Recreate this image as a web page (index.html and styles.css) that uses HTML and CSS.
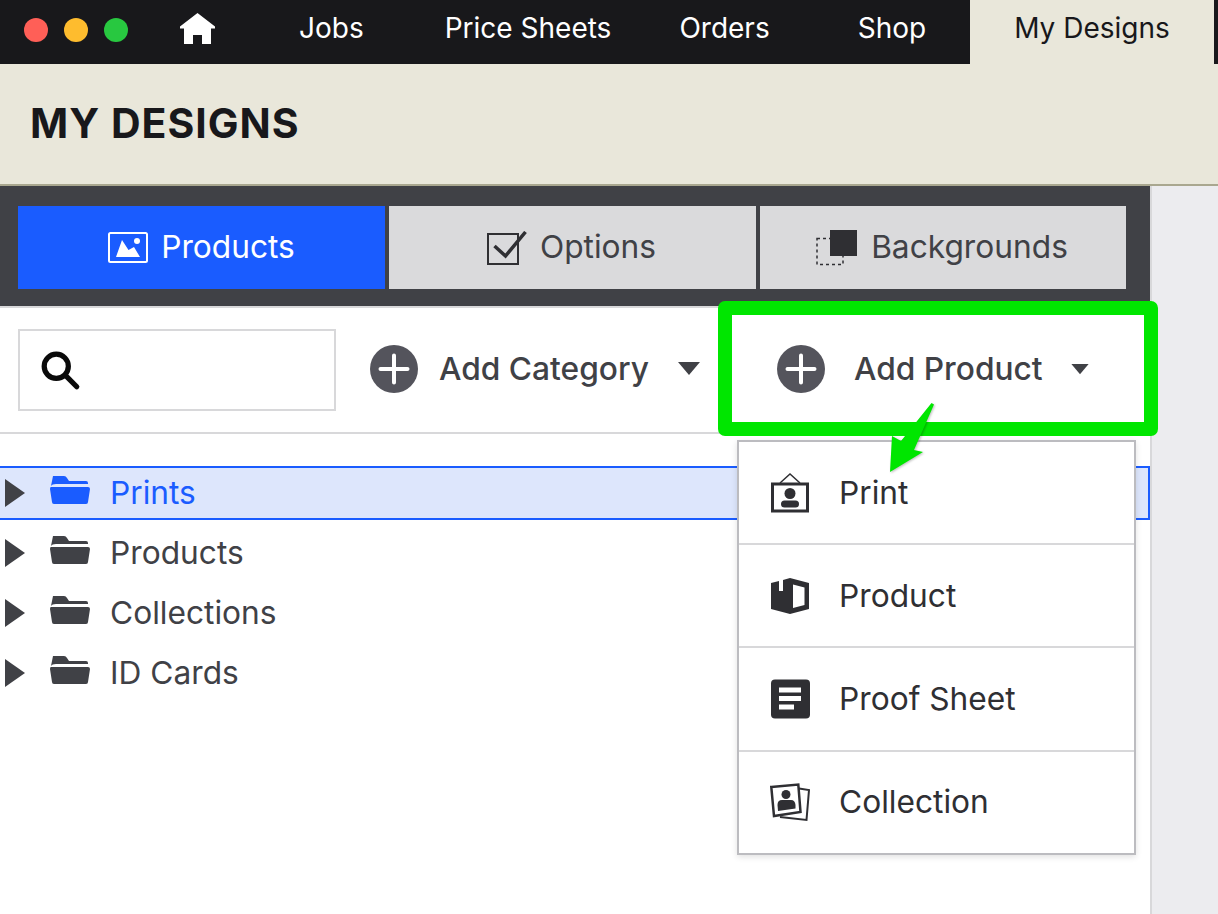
FILE: index.html
```html
<!DOCTYPE html>
<html lang="en">
<head>
<meta charset="utf-8">
<title>My Designs</title>
<link rel="stylesheet" href="styles.css">
</head>
<body>
<div class="app">
  <header class="topbar">
    <div class="lights"><span class="light red"></span><span class="light yellow"></span><span class="light green"></span></div>
    <svg class="home" viewBox="0 0 35 32"><path d="M17.500 0 L35 13.500 V15.500 H31 V31 H22 V22 H13 V31 H4 V15.500 H0 V13.500 Z" fill="#fff"/></svg>
    <nav class="nav">
      <a class="nav-item jobs">Jobs</a>
      <a class="nav-item sheets">Price Sheets</a>
      <a class="nav-item orders">Orders</a>
      <a class="nav-item shop">Shop</a>
      <a class="nav-item active">My Designs</a>
    </nav>
  </header>
  <div class="pagehead"><h1>MY DESIGNS</h1></div>
  <div class="workspace">
    <main class="main">
      <div class="tabs">
        <div class="tab on">
          <svg class="tab-icon" viewBox="0 0 40 32"><rect x="1" y="1" width="38" height="29" rx="1.500" fill="none" stroke="#fff" stroke-width="2"/><path d="M8 25 L14 8 L20.500 18 L26 15 L32 25 Z" fill="#fff"/><circle cx="29" cy="9" r="3" fill="#fff"/></svg>
          <span>Products</span>
        </div>
        <div class="tab">
          <svg class="tab-icon check-icon" viewBox="0 0 40 34"><rect x="1" y="3" width="30" height="30" fill="none" stroke="#2f2f33" stroke-width="2"/><path d="M7.500 15 L18.500 25 L38.500 1" fill="none" stroke="#2f2f33" stroke-width="3.500"/></svg>
          <span>Options</span>
        </div>
        <div class="tab">
          <svg class="tab-icon bg-icon" viewBox="0 0 42 36"><rect x="1" y="8.500" width="26" height="26" fill="none" stroke="#2f2f33" stroke-width="1.500" stroke-dasharray="3 3"/><rect x="14" y="0" width="27" height="26" fill="#2f2f33"/></svg>
          <span>Backgrounds</span>
        </div>
      </div>
      <div class="toolbar">
        <div class="search">
          <svg class="search-icon" viewBox="0 0 40 40"><circle cx="15.500" cy="15.500" r="11.500" fill="none" stroke="#0a0a0a" stroke-width="5"/><path d="M24 24 L35 35" stroke="#0a0a0a" stroke-width="5" stroke-linecap="round"/></svg>
        </div>
        <button class="add add-cat">
          <svg class="plus" viewBox="0 0 48 48"><circle cx="24" cy="24" r="24" fill="#54545c"/><path d="M10.500 24 H37.500 M24 10.500 V37.500" stroke="#fff" stroke-width="4" stroke-linecap="round"/></svg>
          <span>Add Category</span>
          <svg class="caret" viewBox="0 0 22 14"><path d="M0 0 H22 L11 13 Z" fill="#404146"/></svg>
        </button>
        <button class="add add-prod">
          <svg class="plus" viewBox="0 0 48 48"><circle cx="24" cy="24" r="24" fill="#54545c"/><path d="M10.500 24 H37.500 M24 10.500 V37.500" stroke="#fff" stroke-width="4" stroke-linecap="round"/></svg>
          <span>Add Product</span>
          <svg class="caret small" viewBox="0 0 22 14"><path d="M0 0 H22 L11 13 Z" fill="#404146"/></svg>
        </button>
      </div>
      <ul class="tree">
        <li class="row selected">
          <svg class="arrow" viewBox="0 0 20 28"><path d="M0 0 L20 14 L0 28 Z" fill="#404146"/></svg>
          <svg class="folder" viewBox="0 0 40 28"><path d="M3 0 H14 Q16 0 17 2 L19 5 H36 Q38 5 38 7 V8 H6 Q2 8 1 10 Z M1 11 H38 Q40 11 40 13 L38 26 Q38 28 36 28 H4 Q2 28 2 26 L0 13 Q0 11 1 11 Z" fill="currentColor"/></svg>
          <span>Prints</span>
        </li>
        <li class="row">
          <svg class="arrow" viewBox="0 0 20 28"><path d="M0 0 L20 14 L0 28 Z" fill="#404146"/></svg>
          <svg class="folder" viewBox="0 0 40 28"><path d="M3 0 H14 Q16 0 17 2 L19 5 H36 Q38 5 38 7 V8 H6 Q2 8 1 10 Z M1 11 H38 Q40 11 40 13 L38 26 Q38 28 36 28 H4 Q2 28 2 26 L0 13 Q0 11 1 11 Z" fill="currentColor"/></svg>
          <span>Products</span>
        </li>
        <li class="row">
          <svg class="arrow" viewBox="0 0 20 28"><path d="M0 0 L20 14 L0 28 Z" fill="#404146"/></svg>
          <svg class="folder" viewBox="0 0 40 28"><path d="M3 0 H14 Q16 0 17 2 L19 5 H36 Q38 5 38 7 V8 H6 Q2 8 1 10 Z M1 11 H38 Q40 11 40 13 L38 26 Q38 28 36 28 H4 Q2 28 2 26 L0 13 Q0 11 1 11 Z" fill="currentColor"/></svg>
          <span>Collections</span>
        </li>
        <li class="row">
          <svg class="arrow" viewBox="0 0 20 28"><path d="M0 0 L20 14 L0 28 Z" fill="#404146"/></svg>
          <svg class="folder" viewBox="0 0 40 28"><path d="M3 0 H14 Q16 0 17 2 L19 5 H36 Q38 5 38 7 V8 H6 Q2 8 1 10 Z M1 11 H38 Q40 11 40 13 L38 26 Q38 28 36 28 H4 Q2 28 2 26 L0 13 Q0 11 1 11 Z" fill="currentColor"/></svg>
          <span>ID Cards</span>
        </li>
      </ul>
    </main>
    <aside class="gutter"></aside>
  </div>
  <div class="highlight"></div>
  <div class="menu">
    <div class="menu-item">
      <svg class="menu-icon" viewBox="0 0 40 42"><path d="M10 11 L20 2 L30 11" fill="none" stroke="#2f2f33" stroke-width="1.500"/><rect x="2.500" y="12" width="35" height="27" fill="none" stroke="#2f2f33" stroke-width="3"/><circle cx="20" cy="21.500" r="5.500" fill="#2f2f33"/><rect x="11" y="28.500" width="18" height="7" rx="3.500" fill="#2f2f33"/></svg>
      <span>Print</span>
    </div>
    <div class="menu-item">
      <svg class="menu-icon" viewBox="0 0 40 42"><path d="M20 3 L39 8 V34 L20 39 L1 34 V8 L9 6 V16 H13 V5 Z M23 9.500 V33 L34.500 30 V12.500 Z" fill="#2f2f33" fill-rule="evenodd"/></svg>
      <span>Product</span>
    </div>
    <div class="menu-item sheet">
      <svg class="menu-icon" viewBox="0 0 40 42"><rect x="1" y="1.500" width="39" height="39" rx="4" fill="#2f2f33"/><path d="M9 9.500 H31 V14.500 H9 Z M9 18 H31 V23 H9 Z M9 26.500 H24 V31.500 H9 Z" fill="#fff"/></svg>
      <span>Proof Sheet</span>
    </div>
    <div class="menu-item">
      <svg class="menu-icon" viewBox="0 0 40 42"><path d="M29 7.500 L39 9 L36.500 39 L10 36" fill="none" stroke="#2f2f33" stroke-width="2"/><path d="M1.300 6 L28.300 3.500 L30.500 31 L4 35 Z" fill="#fff" stroke="#2f2f33" stroke-width="2.500"/><circle cx="16" cy="13.500" r="4.500" fill="#2f2f33"/><path d="M8 30 L7.500 24 Q7.500 19 12 19 H21 Q25 19 25.500 24 V27.500 Z" fill="#2f2f33"/></svg>
      <span>Collection</span>
    </div>
  </div>
  <svg class="pointer" viewBox="0 0 60 80"><path d="M51.500 3 L54 4.500 L34 50 L43 52 L10 72 L12 36 L21 41 Z" fill="#00e600"/></svg>
</div>
</body>
</html>
```
FILE: styles.css
```css
* { box-sizing: border-box; }
html, body { margin: 0; padding: 0; }
body { font-family: Inter, "Liberation Sans", sans-serif; background: #fff; }
.app { position: relative; width: 1218px; height: 914px; overflow: hidden; }

.topbar { display: flex; align-items: center; height: 64px; background: #18181b; }
.lights { display: flex; gap: 16px; padding-left: 24px; margin-bottom: 4px; }
.light { width: 24px; height: 24px; border-radius: 50%; }
.red { background: #ff5f57; }
.yellow { background: #febc2e; }
.green { background: #28c840; }
.home { width: 35px; height: 32px; margin: 0 0 6px 52px; flex: none; }
.nav { display: flex; align-items: stretch; height: 64px; margin-left: 84px; font-size: 28px; color: #fff; }
.nav-item { display: flex; align-items: center; padding-bottom: 8px; }
.sheets { margin-left: 81px; }
.orders { margin-left: 68px; }
.shop { margin-left: 88px; }
.active { width: 244px; margin-left: 44px; padding-left: 44px; background: #e9e7da; color: #18181b; }

.pagehead { display: flex; align-items: center; height: 122px; padding: 0 0 2px 30px; background: #e9e7da; border-bottom: 2px solid #a9a78f; }
.pagehead h1 { margin: 0; font-size: 41px; font-weight: 700; letter-spacing: 1px; color: #18181b; }

.workspace { display: flex; height: 728px; }
.main { width: 1150px; flex: none; }
.gutter { flex: 1; background: #ececef; border-left: 2px solid #d8d8da; }

.tabs { display: flex; gap: 4px; height: 122px; padding: 20px 24px 17px 18px; background: #404146; border-bottom: 2px solid #d8d8da; }
.tab { display: flex; align-items: center; justify-content: center; gap: 13px; flex: 0 0 367px; padding-right: 2px; font-size: 31.700px; background: #dadadc; color: #404146; }
.tab:last-child { flex-basis: 366px; }
.tab span { margin-top: -2px; }
.tab.on { padding-right: 0; background: #1a5cff; color: #fff; }
.tab-icon { width: 40px; height: 32px; flex: none; }
.check-icon { height: 34px; }
.bg-icon { width: 42px; height: 36px; }

.toolbar { display: flex; align-items: center; height: 126px; border-bottom: 2px solid #d8d8da; padding-left: 18px; }
.search { display: flex; align-items: center; width: 318px; height: 82px; padding-left: 20px; border: 2px solid #d8d8da; }
.search-icon { width: 42px; height: 42px; margin-top: 2px; }
.add { display: flex; align-items: center; padding: 0; border: 0; background: none; font: inherit; font-size: 31.700px; font-weight: 500; color: #404146; margin-top: -2px; }
.add span { margin-top: -2px; }
.plus { width: 48px; height: 48px; flex: none; }
.add-cat { margin-left: 34px; }
.add-cat span { margin-left: 21px; }
.caret { width: 22px; height: 14px; margin-left: 29px; }
.add-prod { margin-left: 77px; }
.add-prod span { margin-left: 29px; }
.caret.small { width: 18px; height: 11px; margin-left: 28px; }

.tree { list-style: none; margin: 32px 0 0; padding: 0; }
.row { display: flex; align-items: center; height: 60px; font-size: 31.700px; color: #404146; padding-left: 5px; }
.row.selected { height: 54px; margin-bottom: 3px; background: #dde6fc; border: 2px solid #1a5cff; border-left: 0; color: #1a5cff; }
.arrow { width: 20px; height: 28px; flex: none; }
.folder { width: 40px; height: 28px; margin-left: 25px; margin-top: -6px; flex: none; }
.row span { margin-left: 20px; margin-top: -2px; }

.highlight { position: absolute; left: 718px; top: 301px; width: 440px; height: 135px; border: 14px solid #00e600; border-radius: 7px; }
.menu { position: absolute; left: 737px; top: 440px; width: 399px; height: 415px; background: #fff; border: 2px solid #bcbcc0; box-shadow: 0 2px 6px rgba(0,0,0,.12); }
.menu-item { display: flex; align-items: center; height: 103px; padding-left: 31px; font-size: 31.700px; color: #2f2f33; border-bottom: 2px solid #d8d8da; }
.menu-item.sheet { height: 104px; }
.menu-item:last-child { border-bottom: 0; padding-bottom: 4px; }
.menu-icon { width: 40px; height: 42px; flex: none; }
.menu-item span { margin-left: 29px; margin-top: -1px; }
.pointer { position: absolute; left: 880px; top: 400px; width: 60px; height: 80px; filter: drop-shadow(1px 1px 1px rgba(0,0,0,.25)); }
```
